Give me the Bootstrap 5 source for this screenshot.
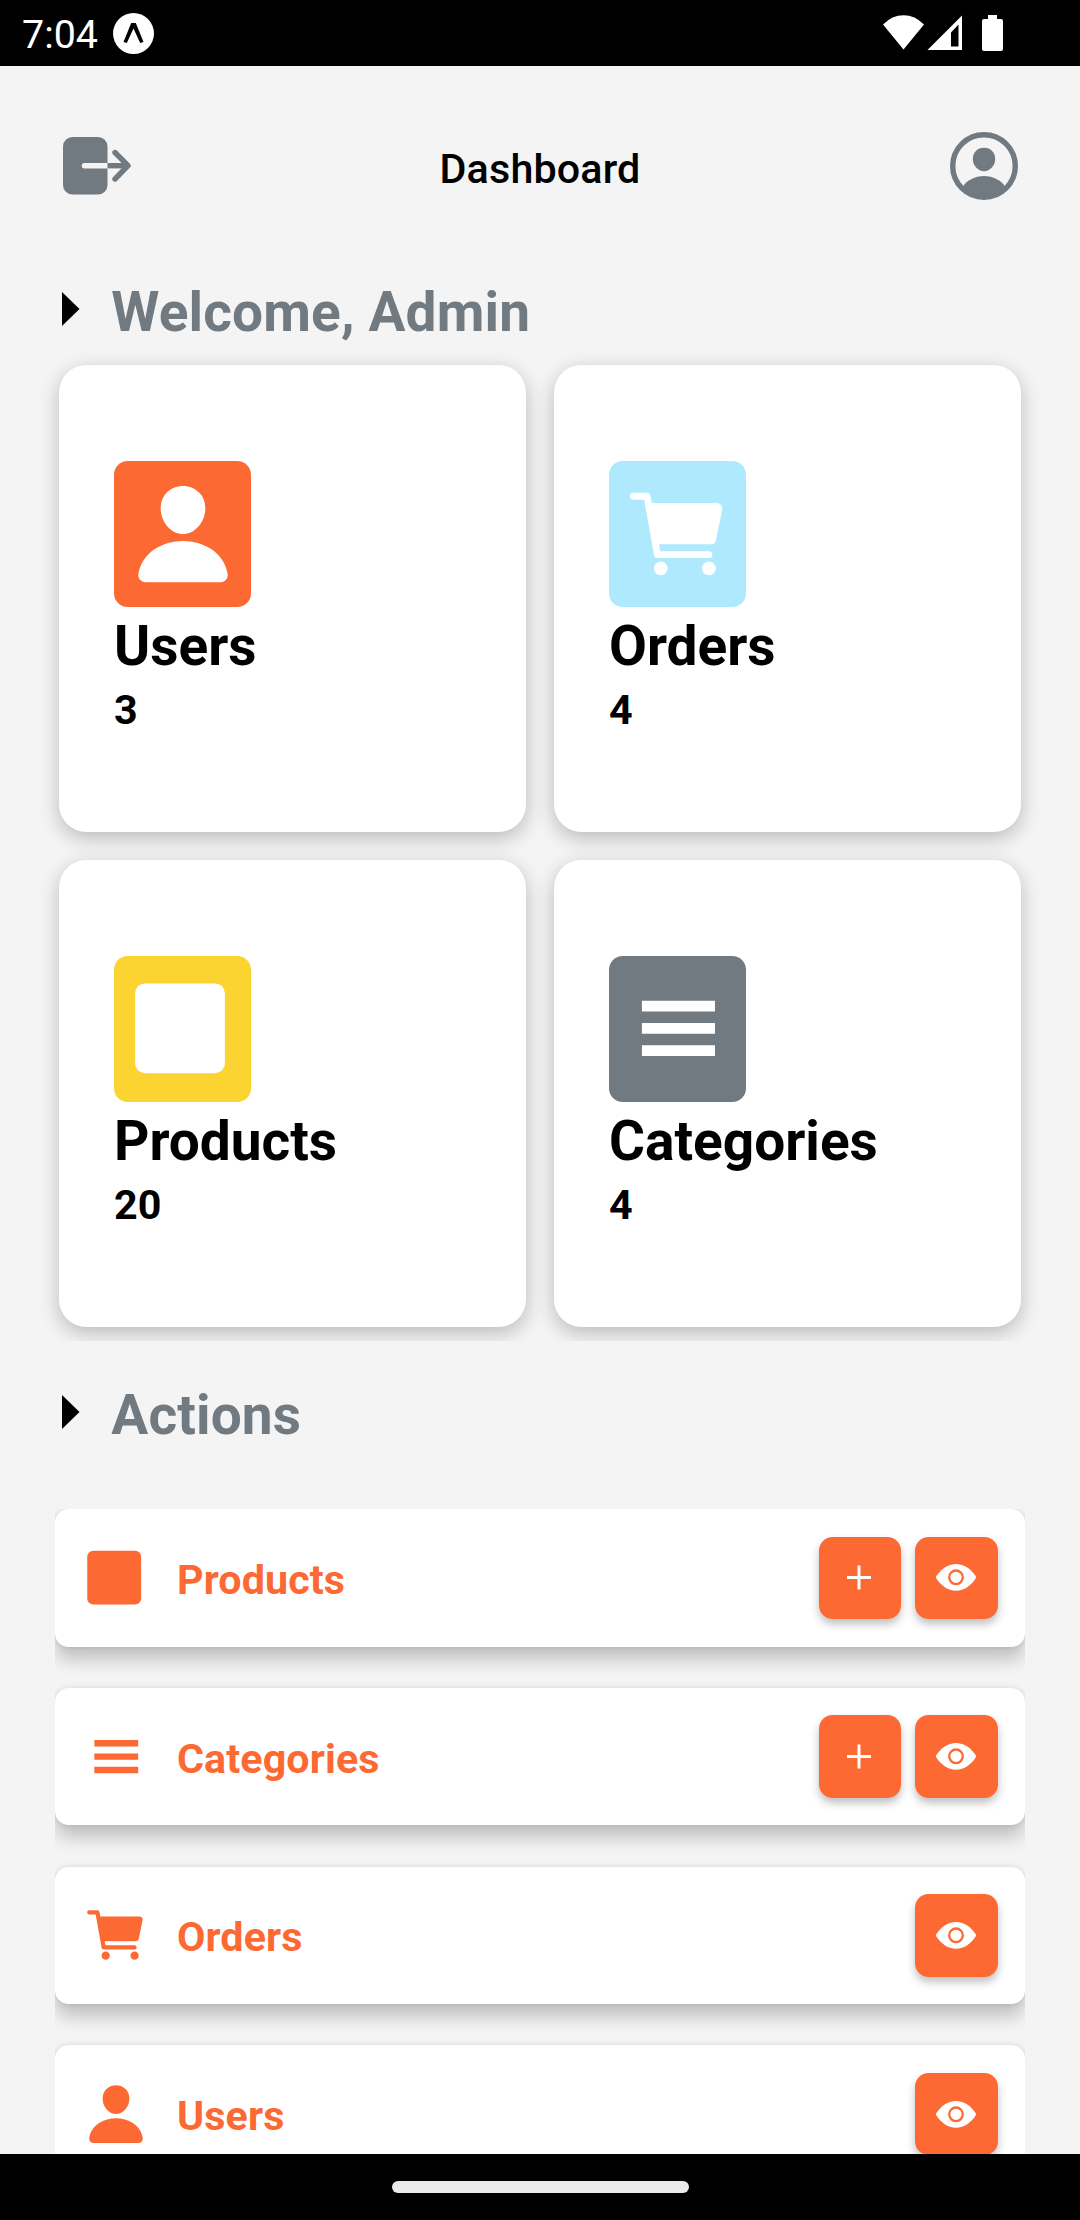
<!DOCTYPE html>
<html lang="en">
<head>
<meta charset="utf-8">
<meta name="viewport" content="width=device-width, initial-scale=1">
<title>Dashboard</title>
<link rel="stylesheet" href="https://cdn.jsdelivr.net/npm/bootstrap@5.3.0/dist/css/bootstrap.min.css">
<style>
  :root { --accent:#fd6933; --slate:#717981; --page:#f4f4f4; }
  body { width:1080px; height:2220px; overflow:hidden; background:var(--page); font-family:Roboto,sans-serif; color:#000; }
  svg { display:block; flex:none; }
  .status-strip { height:66px; padding:0 77px 0 22px; background:#000; color:#fff; }
  .clock { font-size:39.4px; line-height:62px; padding-top:3px; width:91px; }
  .screen { padding:0 55px; min-height:0; }
  .top-bar { height:200px; padding:0 7.5px; flex:none; }
  .top-title { font-size:41.25px; font-weight:500; line-height:50px; padding-top:5px; letter-spacing:.15px; }
  .section-head { padding-left:7.3px; gap:31.5px; flex:none; }
  .section-head svg { margin-bottom:6px; }
  .section-head h2 { font-size:55px; line-height:72px; font-weight:700; color:var(--slate); letter-spacing:.15px; }
  .head-welcome { height:99px; padding-bottom:7px; }
  .head-actions { height:168px; padding-bottom:20px; }
  .stats { padding:0 4px 14px; clip-path:inset(-40px -40px 0 -40px); flex:none; }
  .stats .row { --bs-gutter-x:28px; --bs-gutter-y:28px; }
  .stat-card { height:467px; border-radius:27.5px; padding:96px 0 0 55px; box-shadow:0 6px 20px rgba(0,0,0,.24); }
  .tile { width:137px; height:146px; border-radius:13.75px; }
  .tile-users { background:var(--accent); } .tile-orders { background:#aee9fd; }
  .tile-products { background:#fcd432; } .tile-categories { background:var(--slate); }
  .stat-name { font-size:55px; font-weight:700; height:73px; line-height:78px; }
  .stat-value { font-size:41.25px; font-weight:700; height:55px; line-height:61px; }
  .actions { gap:41.25px; clip-path:inset(0 0 -200px 0); flex:none; }
  .action-row { height:137.5px; padding:27.5px; border-radius:13.75px; color:var(--accent);
    box-shadow:0 12px 18px rgba(0,0,0,.22), 0 0 5px rgba(0,0,0,.1); }
  .action-name { font-size:41.25px; font-weight:700; line-height:50px; padding:4px 0 0 28.5px; letter-spacing:.1px; }
  .action-buttons { gap:13.75px; }
  .btn-act { width:82.5px; height:82.5px; border-radius:13.75px; background:var(--accent); color:#fff;
    box-shadow:0 5px 8px rgba(0,0,0,.25); padding:0; border:0; }
  .gesture-strip { height:66px; background:#000; flex:none; }
  .gesture-pill { width:297px; height:12px; background:#ebebeb; }
</style>
<script src="https://cdn.jsdelivr.net/npm/bootstrap@5.3.0/dist/js/bootstrap.bundle.min.js"></script>
</head>
<body class="d-flex flex-column">
<svg width="0" height="0" class="position-absolute">
  <symbol id="i-person" viewBox="0 0 512 512"><path d="M332.64 64.58C313.18 43.57 286 32 256 32c-30.16 0-57.43 11.5-76.8 32.38-19.58 21.11-29.12 49.8-26.88 80.78C156.76 206.28 203.27 256 256 256s99.16-49.71 103.67-110.82c2.27-30.7-7.33-59.33-27.03-80.6zM432 480H80a31 31 0 01-24.2-11.13c-6.5-7.77-9.12-18.38-7.18-29.11C57.06 392.94 83.4 353.61 124.8 326c36.78-24.51 83.37-38 131.2-38s94.42 13.5 131.2 38c41.4 27.6 67.74 66.93 76.18 113.75 1.94 10.73-.68 21.34-7.18 29.11A31 31 0 01432 480z"/></symbol>
  <symbol id="i-cart" viewBox="0 0 512 512"><circle cx="176" cy="416" r="32"/><circle cx="400" cy="416" r="32"/><path d="M456.8 120.78a23.92 23.92 0 00-18.56-8.78H133.89l-6.13-34.78A16 16 0 00112 64H48a16 16 0 000 32h50.58l45.66 258.78A16 16 0 00160 368h240a16 16 0 000-32H173.42l-5.64-32h241.66A24.07 24.07 0 00433 284.71l28.8-144a24 24 0 00-5-19.93z"/></symbol>
  <symbol id="i-square" viewBox="0 0 512 512"><rect x="33" y="44" width="418" height="418" rx="46"/></symbol>
  <symbol id="i-menu" viewBox="0 0 512 512"><path d="M88 124h340v50H88zM88 228h340v50H88zM88 332h340v50H88z"/></symbol>
  <symbol id="i-plus" viewBox="0 0 55 55"><path d="M14 26h24v3H14zM24.5 15.5h3v24h-3z"/></symbol>
  <symbol id="i-eye" viewBox="0 0 40 27"><path d="M.4 12.1C4.6 5.4 12 0 20 0S35.4 5.4 39.6 12.1Q40.3 13.3 39.6 14.5C35.4 21.3 28 26.7 20 26.7S4.6 21.3 .4 14.5Q-.3 13.3 .4 12.1Z"/><circle cx="20" cy="13.3" r="6.8" fill="none" stroke="#fd6933" stroke-width="2.3"/></symbol>
</svg>

<div class="status-strip d-flex align-items-center flex-shrink-0">
  <span class="clock">7:04</span>
  <svg width="41" height="41" viewBox="0 0 41 41"><circle cx="20.5" cy="20.5" r="20.5" fill="#fff"/><path d="M10.5 29L18.2 10H22.8L30.5 29L27.2 30L20.5 15.5L13.8 30Z" fill="#000"/></svg>
  <svg class="ms-auto" width="120" height="36" viewBox="0 0 120 36" fill="#fff">
    <path d="M0 9.5Q9 .2 20.5 .2T41 9.5L20.5 34.500Z"/>
    <path fill-rule="evenodd" d="M44.5 35H79V.5ZM68 17.5L75.5 9.5V31.5H68Z"/>
    <path d="M105 0h9v4h4a2 2 0 012 2v28a2 2 0 01-2 2h-17a2 2 0 01-2-2V6a2 2 0 012-2h4z"/>
  </svg>
</div>

<main class="screen d-flex flex-column flex-grow-1 overflow-hidden">
  <header class="top-bar d-flex align-items-center justify-content-between">
    <svg width="68" height="58" viewBox="0 0 68 58" fill="none" stroke-width="5.4" stroke-linecap="round" stroke-linejoin="round">
      <rect width="44.5" height="57.5" rx="9.5" fill="#717981"/>
      <path d="M21.5 28.7H44.5" stroke="#f4f4f4" stroke-linecap="round"/>
      <path d="M44.5 28.7H63" stroke="#717981" stroke-linecap="butt"/>
      <path d="M52 15.5L65 28.7L52 42" stroke="#717981"/>
    </svg>
    <h1 class="top-title mb-0">Dashboard</h1>
    <svg width="68" height="68" viewBox="0 0 68 68" fill="#717981">
      <circle cx="34" cy="34" r="31.3" fill="none" stroke="#717981" stroke-width="5.4"/>
      <path d="M34 15.7C40.5 15.7 45.2 20.5 45.2 27S40 39.3 34 39.3S22.800 33.5 22.8 27S27.5 15.700 34 15.700Z"/>
      <path d="M12.500 55C17 48 25 44 34 44S51 48 55.500 55A32 32 0 0112.500 55Z"/>
    </svg>
  </header>

  <div class="section-head head-welcome d-flex align-items-center">
    <svg width="17.5" height="34" viewBox="0 0 17.5 34"><path d="M0 0L17.5 17L0 34Z"/></svg>
    <h2 class="mb-0">Welcome, Admin</h2>
  </div>

  <section class="stats">
    <div class="row">
      <div class="col-6"><div class="stat-card bg-white d-flex flex-column">
        <div class="tile tile-users d-flex align-items-center justify-content-center"><svg width="110" height="110" fill="#fff"><use href="#i-person"/></svg></div>
        <div class="stat-name">Users</div><div class="stat-value">3</div>
      </div></div>
      <div class="col-6"><div class="stat-card bg-white d-flex flex-column">
        <div class="tile tile-orders d-flex align-items-center justify-content-center"><svg width="110" height="110" fill="#fff"><use href="#i-cart"/></svg></div>
        <div class="stat-name">Orders</div><div class="stat-value">4</div>
      </div></div>
      <div class="col-6"><div class="stat-card bg-white d-flex flex-column">
        <div class="tile tile-products d-flex align-items-center justify-content-center"><svg width="110" height="110" fill="#fff"><use href="#i-square"/></svg></div>
        <div class="stat-name">Products</div><div class="stat-value">20</div>
      </div></div>
      <div class="col-6"><div class="stat-card bg-white d-flex flex-column">
        <div class="tile tile-categories d-flex align-items-center justify-content-center"><svg width="110" height="110" fill="#fff"><use href="#i-menu"/></svg></div>
        <div class="stat-name">Categories</div><div class="stat-value">4</div>
      </div></div>
    </div>
  </section>

  <div class="section-head head-actions d-flex align-items-center">
    <svg width="17.5" height="34" viewBox="0 0 17.5 34"><path d="M0 0L17.5 17L0 34Z"/></svg>
    <h2 class="mb-0">Actions</h2>
  </div>

  <section class="actions d-flex flex-column">
    <div class="action-row bg-white d-flex align-items-center">
      <svg width="66" height="66" fill="currentColor"><use href="#i-square"/></svg>
      <span class="action-name">Products</span>
      <div class="action-buttons d-flex ms-auto">
        <button class="btn-act d-flex align-items-center justify-content-center" aria-label="Add product"><svg width="55" height="55" fill="#fff"><use href="#i-plus"/></svg></button>
        <button class="btn-act d-flex align-items-center justify-content-center" aria-label="View products"><svg width="40" height="27" fill="#fff"><use href="#i-eye"/></svg></button>
      </div>
    </div>
    <div class="action-row bg-white d-flex align-items-center">
      <svg width="66" height="66" fill="currentColor"><use href="#i-menu"/></svg>
      <span class="action-name">Categories</span>
      <div class="action-buttons d-flex ms-auto">
        <button class="btn-act d-flex align-items-center justify-content-center" aria-label="Add category"><svg width="55" height="55" fill="#fff"><use href="#i-plus"/></svg></button>
        <button class="btn-act d-flex align-items-center justify-content-center" aria-label="View categories"><svg width="40" height="27" fill="#fff"><use href="#i-eye"/></svg></button>
      </div>
    </div>
    <div class="action-row bg-white d-flex align-items-center">
      <svg width="66" height="66" fill="currentColor"><use href="#i-cart"/></svg>
      <span class="action-name">Orders</span>
      <div class="action-buttons d-flex ms-auto">
        <button class="btn-act d-flex align-items-center justify-content-center" aria-label="View orders"><svg width="40" height="27" fill="#fff"><use href="#i-eye"/></svg></button>
      </div>
    </div>
    <div class="action-row bg-white d-flex align-items-center">
      <svg width="66" height="66" fill="currentColor"><use href="#i-person"/></svg>
      <span class="action-name">Users</span>
      <div class="action-buttons d-flex ms-auto">
        <button class="btn-act d-flex align-items-center justify-content-center" aria-label="View users"><svg width="40" height="27" fill="#fff"><use href="#i-eye"/></svg></button>
      </div>
    </div>
  </section>
</main>

<div class="gesture-strip d-flex align-items-center justify-content-center"><div class="gesture-pill rounded-pill"></div></div>
</body>
</html>
